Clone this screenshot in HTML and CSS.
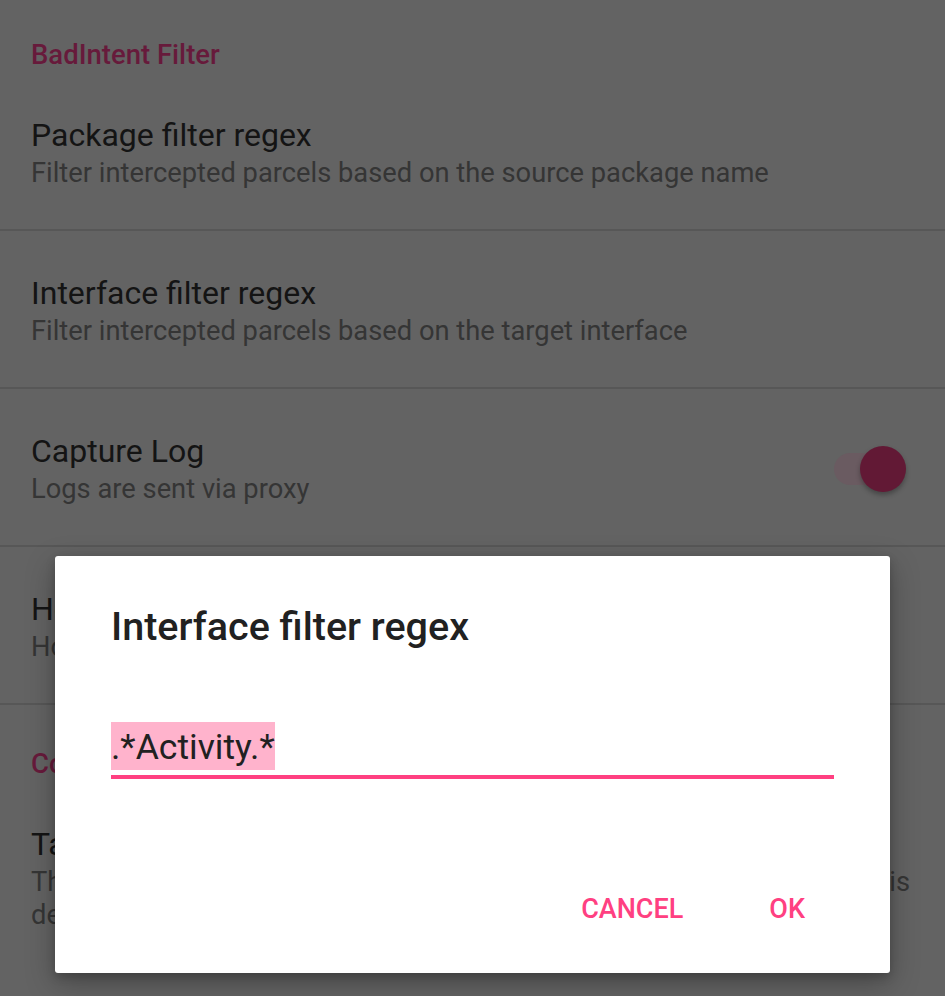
FILE: index.html
```html
<!DOCTYPE html>
<html>
<head>
<meta charset="utf-8">
<link rel="stylesheet" href="styles.css">
</head>
<body>
<div class="screen">
  <div class="category">BadIntent Filter</div>
  <div class="pref divided">
    <div class="texts">
      <div class="title">Package filter regex</div>
      <div class="summary">Filter intercepted parcels based on the source package name</div>
    </div>
  </div>
  <div class="pref divided">
    <div class="texts">
      <div class="title">Interface filter regex</div>
      <div class="summary">Filter intercepted parcels based on the target interface</div>
    </div>
  </div>
  <div class="pref divided">
    <div class="texts">
      <div class="title">Capture Log</div>
      <div class="summary">Logs are sent via proxy</div>
    </div>
    <div class="switch">
      <div class="track"></div>
      <div class="thumb"></div>
    </div>
  </div>
  <div class="pref divided">
    <div class="texts">
      <div class="title">Hook Broadcasts</div>
      <div class="summary">Hook intents sent via broadcasts</div>
    </div>
  </div>
  <div class="category spaced">Connection Settings</div>
  <div class="pref">
    <div class="texts">
      <div class="title">Target IP</div>
      <div class="summary">
        <span class="line-full">The IP address of the host where the proxy runs. The default value is</span>
        <span class="line">defined by the emulator</span>
      </div>
    </div>
  </div>

  <div class="dialog">
    <div class="dialog-title">Interface filter regex</div>
    <div class="field">
      <span class="field-text">.*Activity.*</span>
    </div>
    <div class="actions">
      <span class="btn">CANCEL</span>
      <span class="btn">OK</span>
    </div>
  </div>
</div>
</body>
</html>
```

FILE: styles.css
```css
* { box-sizing: border-box; }
html, body {
  margin: 0;
  padding: 0;
  background: #636363;
}
body {
  font-family: Roboto, "Noto Sans", sans-serif;
}
.screen {
  position: relative;
  width: 945px;
  height: 996px;
  overflow: hidden;
  background: #636363;
}
.category {
  padding: 39px 31px 2px;
  height: 73px;
  line-height: 32px;
  font-size: 27.5px;
  font-weight: 500;
  color: #671a3b;
}
.category.spaced {
  padding-top: 43px;
  height: 77px;
}
.pref {
  display: flex;
  align-items: flex-start;
  min-height: 158px;
  padding: 42px 35px 38px 31px;
}
.pref.divided {
  border-bottom: 2px solid #575757;
}
.texts {
  flex: 1;
  min-width: 0;
}
.title {
  font-size: 32px;
  line-height: 40px;
  color: #141414;
}
.summary {
  margin-top: 2px;
  font-size: 27.3px;
  line-height: 33px;
  color: #353535;
}
.line-full {
  display: block;
  text-align: justify;
  text-align-last: justify;
}
.line {
  display: block;
}
.switch {
  position: relative;
  align-self: center;
  width: 76px;
  height: 46px;
  margin-right: 2px;
}
.track {
  position: absolute;
  left: 2px;
  top: 7px;
  width: 62px;
  height: 32px;
  border-radius: 16px;
  background: #6a5b61;
}
.thumb {
  position: absolute;
  left: 28px;
  top: 0;
  width: 46px;
  height: 46px;
  border-radius: 50%;
  background: #621935;
  box-shadow: 0 3px 5px rgba(0,0,0,0.3);
}
.dialog {
  position: absolute;
  left: 55px;
  top: 556px;
  width: 835px;
  height: 417px;
  background: #ffffff;
  border-radius: 3px;
  box-shadow: 0 10px 30px rgba(0,0,0,0.28), 0 4px 10px rgba(0,0,0,0.18);
  padding: 46px 56px 0 56px;
  display: flex;
  flex-direction: column;
}
.dialog-title {
  font-size: 39.5px;
  font-weight: 500;
  line-height: 50px;
  color: #212121;
}
.field {
  margin-top: 70px;
  height: 57px;
  border-bottom: 4px solid #ff4081;
  display: flex;
  align-items: flex-start;
}
.field-text {
  display: inline-block;
  height: 48px;
  line-height: 50px;
  font-size: 35.5px;
  color: #212121;
  background: #ffb3cc;
}
.actions {
  display: flex;
  justify-content: flex-end;
  gap: 86px;
  margin-top: 115px;
  padding-right: 29px;
}
.btn {
  font-size: 27px;
  font-weight: 500;
  line-height: 30px;
  color: #ff4081;
}
```
